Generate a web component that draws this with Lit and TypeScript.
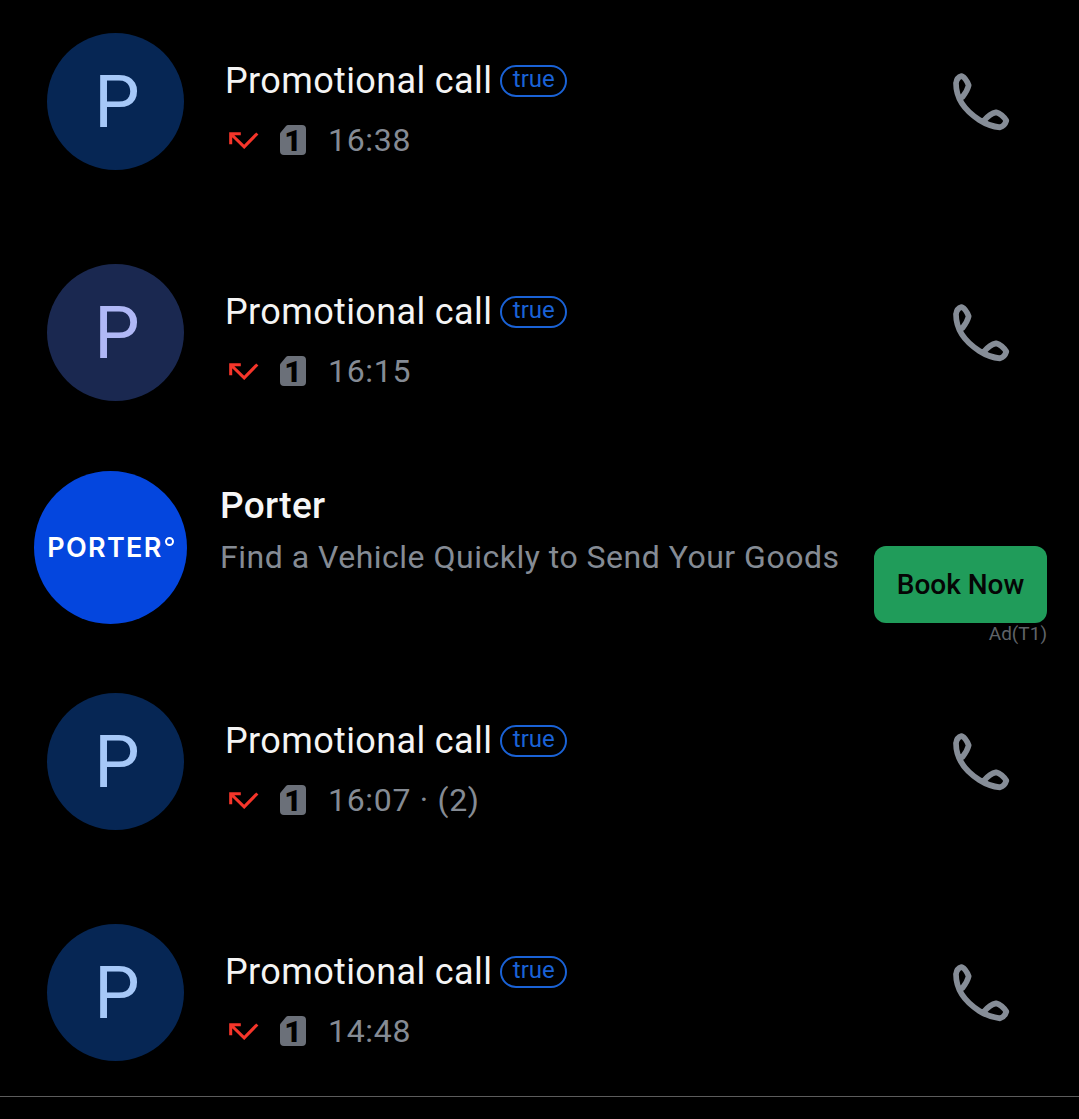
import { LitElement, html, css, svg } from 'lit';
import { customElement } from 'lit/decorators.js';

const calls = [
  { time: '16:38', bg: '#062654', fg: '#a6c8f8' },
  { time: '16:15', bg: '#1a2850', fg: '#b0b8f6' },
  null,
  { time: '16:07 · (2)', bg: '#062654', fg: '#a6c8f8' },
  { time: '14:48', bg: '#062654', fg: '#a6c8f8' },
];

const missedIcon = svg`<path d="M62 41 H32 V72 M32 41 L72 80 L111 40" fill="none" stroke="#f5352a" stroke-width="9"/>`;
const phoneIcon = svg`<path d="M78 70 Q80 52 95 48 Q108 54 116 76 Q112 92 98 110 M78 70 Q78 135 148 180 Q178 199 210 202 Q224 198 229 182 Q216 162 198 157 Q180 160 162 182" fill="none" stroke="#868d97" stroke-width="17" stroke-linejoin="round" stroke-linecap="round"/>`;

@customElement('app-root')
export class AppRoot extends LitElement {
  static styles = css`
    :host {
      display: block;
      height: 1119px;
      background: #000;
      font-family: Roboto, "Noto Sans", sans-serif;
      overflow: hidden;
    }

    .list {
      display: flex;
      flex-direction: column;
      padding-top: 33px;
      border-bottom: 1px solid #5c5c5c;
      height: 1063px;
    }

    .row {
      display: flex;
      align-items: flex-start;
      height: 137px;
      padding-left: 47px;
      flex: none;
    }

    .row + .row {
      margin-top: 94px;
    }

    .avatar {
      box-sizing: border-box;
      width: 137px;
      height: 137px;
      padding: 2px 0 0 3px;
      border-radius: 50%;
      display: flex;
      align-items: center;
      justify-content: center;
      font-size: 72px;
      flex: none;
    }

    .info {
      margin-left: 41px;
      padding-top: 27px;
      flex: 1;
    }

    .title {
      display: flex;
      align-items: center;
      gap: 8px;
      height: 42px;
      font-size: 36px;
      letter-spacing: 0.37px;
      color: #f4f4f4;
    }

    .badge {
      box-sizing: border-box;
      width: 67px;
      height: 32px;
      margin-top: -1px;
      border: 2.5px solid #1a62d6;
      border-radius: 16px;
      color: #1a62d6;
      font-size: 24px;
      letter-spacing: 0;
      line-height: 25px;
      text-align: center;
    }

    .meta {
      display: flex;
      align-items: center;
      height: 40px;
      margin-top: 18px;
      color: #858b94;
      font-size: 32px;
      letter-spacing: 0.7px;
    }

    .missed {
      width: 31px;
      height: 19px;
      margin-left: 3px;
      margin-top: -2px;
    }

    .sim {
      display: grid;
      width: 26px;
      height: 30px;
      margin-left: 21px;
      margin-right: 22px;
      color: #000;
    }

    .sim > * {
      grid-area: 1 / 1;
    }

    .sim svg {
      width: 26px;
      height: 30px;
    }

    .sim span {
      font-size: 30px;
      font-weight: 900;
      line-height: 30px;
      letter-spacing: 0;
      text-align: center;
      padding-top: 1px;
    }

    .phone {
      width: 100px;
      height: 80px;
      margin: 27px 49px 0 0;
      flex: none;
    }

    .ad {
      display: flex;
      flex: none;
      height: 152px;
      padding: 70px 32px 70px 34px;
    }

    .logo {
      width: 153px;
      height: 153px;
      border-radius: 50%;
      background: #0446de;
      display: flex;
      align-items: center;
      justify-content: center;
      flex: none;
      color: #fff;
      font-family: Inter, sans-serif;
      font-size: 27px;
      font-weight: 600;
      letter-spacing: 1.3px;
    }

    .ring {
      flex: none;
      width: 5px;
      height: 5px;
      border: 2px solid #fff;
      border-radius: 50%;
      margin: -12px 0 0 2px;
    }

    .ad-text {
      margin-left: 33px;
      flex: 1;
    }

    .ad-title {
      font-size: 37px;
      font-weight: 500;
      letter-spacing: 0.3px;
      color: #f6f6f6;
      line-height: 42px;
      margin-top: 14px;
    }

    .ad-sub {
      font-size: 32px;
      color: #858b94;
      line-height: 38px;
      margin-top: 11px;
      letter-spacing: 0.5px;
      white-space: nowrap;
    }

    .cta {
      display: flex;
      flex-direction: column;
      align-items: flex-end;
      padding-top: 75px;
      flex: none;
    }

    .book {
      width: 173px;
      height: 77px;
      flex: none;
      border-radius: 12px;
      background: #209c5a;
      color: #050505;
      font-size: 28px;
      font-weight: 500;
      display: flex;
      align-items: center;
      justify-content: center;
    }

    .tag {
      font-size: 19px;
      line-height: 22px;
      color: #5f6368;
    }
  `;

  renderCall(c: { time: string; bg: string; fg: string }) {
    return html`
      <div class="row">
        <div class="avatar" style="background:${c.bg};color:${c.fg}">P</div>
        <div class="info">
          <div class="title">Promotional call <span class="badge">true</span></div>
          <div class="meta">
            <svg class="missed" viewBox="24 30 92 56">${missedIcon}</svg>
            <div class="sim">
              <svg viewBox="0 0 26 30">
                <path d="M8 0 H22 Q26 0 26 4 V26 Q26 30 22 30 H4 Q0 30 0 26 V9 Q0 8 1 7 L6 1 Q7 0 8 0 Z" fill="#6b7079"/>
              </svg>
              <span>1</span>
            </div>
            ${c.time}
          </div>
        </div>
        <svg class="phone" viewBox="0 0 300 240">${phoneIcon}</svg>
      </div>
    `;
  }

  renderAd() {
    return html`
      <div class="ad">
        <div class="logo">PORTER<span class="ring"></span></div>
        <div class="ad-text">
          <div class="ad-title">Porter</div>
          <div class="ad-sub">Find a Vehicle Quickly to Send Your Goods</div>
        </div>
        <div class="cta">
          <div class="book">Book Now</div>
          <div class="tag">Ad(T1)</div>
        </div>
      </div>
    `;
  }

  render() {
    return html`
      <div class="list">
        ${calls.map((c) => (c ? this.renderCall(c) : this.renderAd()))}
      </div>
    `;
  }
}
